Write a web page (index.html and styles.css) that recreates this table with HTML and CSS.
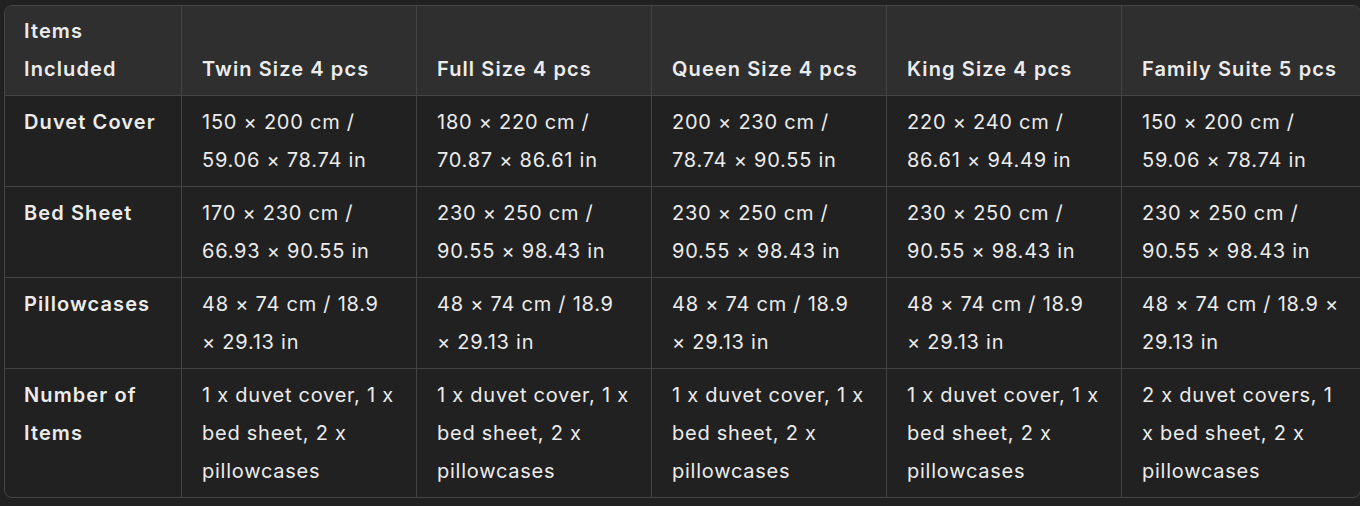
FILE: index.html
```html
<!DOCTYPE html>
<html>
<head>
<meta charset="utf-8">
<link rel="stylesheet" href="styles.css">
</head>
<body>
<div class="wrap">
<table class="spec">
  <colgroup>
    <col class="c0"><col class="c"><col class="c"><col class="c"><col class="c"><col class="clast">
  </colgroup>
  <thead>
    <tr>
      <th>Items Included</th>
      <th>Twin Size 4 pcs</th>
      <th>Full Size 4 pcs</th>
      <th>Queen Size 4 pcs</th>
      <th>King Size 4 pcs</th>
      <th>Family Suite 5 pcs</th>
    </tr>
  </thead>
  <tbody>
    <tr>
      <td class="lbl">Duvet Cover</td>
      <td>150 × 200 cm / 59.06 × 78.74 in</td>
      <td>180 × 220 cm / 70.87 × 86.61 in</td>
      <td>200 × 230 cm / 78.74 × 90.55 in</td>
      <td>220 × 240 cm / 86.61 × 94.49 in</td>
      <td>150 × 200 cm / 59.06 × 78.74 in</td>
    </tr>
    <tr>
      <td class="lbl">Bed Sheet</td>
      <td>170 × 230 cm / 66.93 × 90.55 in</td>
      <td>230 × 250 cm / 90.55 × 98.43 in</td>
      <td>230 × 250 cm / 90.55 × 98.43 in</td>
      <td>230 × 250 cm / 90.55 × 98.43 in</td>
      <td>230 × 250 cm / 90.55 × 98.43 in</td>
    </tr>
    <tr>
      <td class="lbl">Pillowcases</td>
      <td>48 × 74 cm / 18.9 × 29.13 in</td>
      <td>48 × 74 cm / 18.9 × 29.13 in</td>
      <td>48 × 74 cm / 18.9 × 29.13 in</td>
      <td>48 × 74 cm / 18.9 × 29.13 in</td>
      <td>48 × 74 cm / 18.9 × 29.13 in</td>
    </tr>
    <tr>
      <td class="lbl">Number of Items</td>
      <td>1 x duvet cover, 1 x bed sheet, 2 x pillowcases</td>
      <td>1 x duvet cover, 1 x bed sheet, 2 x pillowcases</td>
      <td>1 x duvet cover, 1 x bed sheet, 2 x pillowcases</td>
      <td>1 x duvet cover, 1 x bed sheet, 2 x pillowcases</td>
      <td>2 x duvet covers, 1 x bed sheet, 2 x pillowcases</td>
    </tr>
  </tbody>
</table>
</div>
</body>
</html>
```
FILE: styles.css
```css
html, body {
  margin: 0;
  background: #212121;
}
.wrap {
  padding: 5px 0 0 4px;
}
.spec {
  width: 1356px;
  table-layout: fixed;
  border-collapse: separate;
  border-spacing: 0;
  border: 1px solid #444444;
  border-radius: 8px;
  overflow: hidden;
  font-family: Inter, "Noto Sans", sans-serif;
  font-size: 20px;
  line-height: 38px;
  color: #ececec;
}
.c0 { width: 177px; }
.c { width: 235px; }
.clast { width: 238px; }
.spec th, .spec td {
  padding: 7px 19px 7px 20px;
  text-align: left;
  border-right: 1px solid #444444;
  border-bottom: 1px solid #444444;
}
.spec th:first-child, .spec td:first-child {
  padding-left: 19px;
}
.spec th:last-child, .spec td:last-child {
  border-right: none;
}
.spec tbody tr:last-child td {
  border-bottom: none;
}
.spec th {
  padding-top: 6px;
  background: #2f2f2f;
  font-weight: 600;
  letter-spacing: 1.1px;
  vertical-align: bottom;
}
.spec td {
  vertical-align: top;
  font-weight: 400;
  letter-spacing: 0.75px;
}
.spec td.lbl {
  font-weight: 600;
  letter-spacing: 1.1px;
}
```
